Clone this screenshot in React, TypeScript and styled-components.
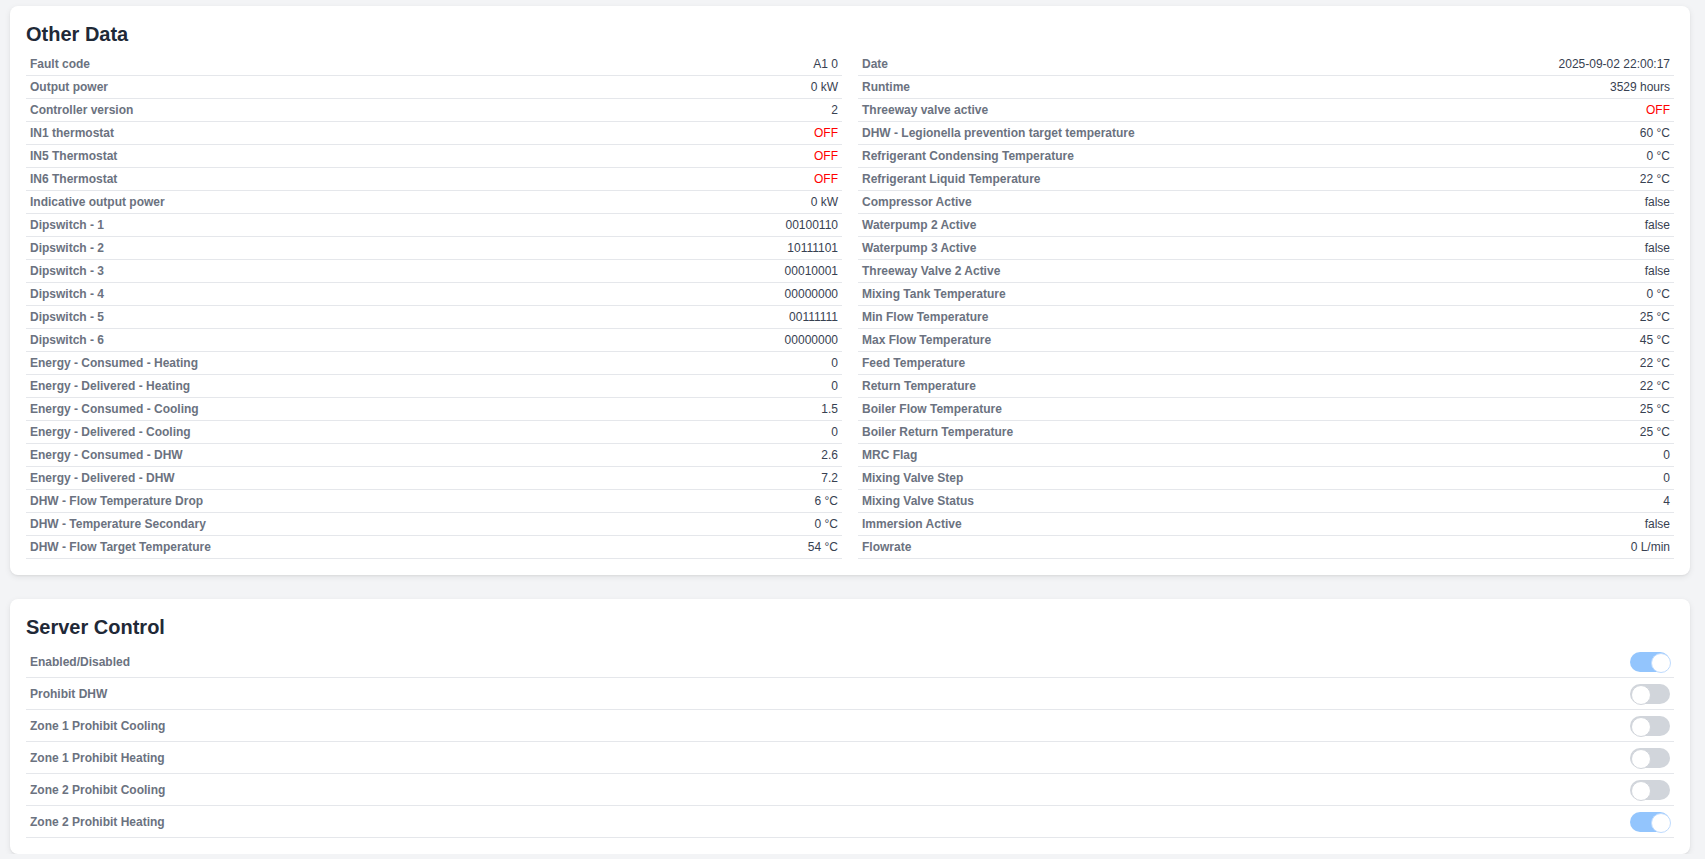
import styled, { createGlobalStyle } from 'styled-components';

const GlobalStyle = createGlobalStyle`
  html,
  body {
    margin: 0;
    background: #f3f4f6;
    font-family: 'Liberation Sans', Arial, Helvetica, sans-serif;
  }
  * {
    box-sizing: border-box;
  }
`;

const Page = styled.div`
  display: flex;
  flex-direction: column;
  gap: 24px;
  padding: 6px 15px 0 10px;
`;

const Card = styled.section`
  background: #ffffff;
  border-radius: 8px;
  box-shadow: 0 2px 6px rgba(0, 0, 0, 0.08), 0 1px 2px rgba(0, 0, 0, 0.05);
  padding: 16px;
`;

const Title = styled.h2`
  margin: 0 0 7px;
  font-size: 20px;
  line-height: 24px;
  font-weight: 700;
  color: #1f2937;
`;

const Columns = styled.div`
  display: grid;
  grid-template-columns: 1fr 1fr;
  column-gap: 16px;
`;

const List = styled.div`
  display: flex;
  flex-direction: column;
`;

const Row = styled.div<{ $tall?: boolean }>`
  display: flex;
  align-items: center;
  justify-content: space-between;
  height: ${({ $tall }) => ($tall ? '32px' : '23px')};
  padding: 0 4px;
  border-bottom: 1px solid #e5e7eb;
  font-size: 12px;
  line-height: 16px;
`;

const Label = styled.span`
  font-weight: 700;
  color: #6b7280;
`;

const Value = styled.span<{ $alert?: boolean }>`
  color: ${({ $alert }) => ($alert ? '#ff0000' : '#374151')};
`;

const Toggle = styled.span<{ $on: boolean }>`
  position: relative;
  display: inline-block;
  width: 40px;
  height: 20px;
  border-radius: 10px;
  background: ${({ $on }) => ($on ? '#93c5fd' : '#d1d5db')};

  &::after {
    content: '';
    position: absolute;
    top: 1px;
    left: ${({ $on }) => ($on ? '21px' : '1px')};
    width: 18px;
    height: 18px;
    border-radius: 50%;
    background: #ffffff;
    border: 1px solid ${({ $on }) => ($on ? '#bfdbfe' : '#d1d5db')};
  }
`;

type Item = [string, string];

const leftItems: Item[] = [
  ['Fault code', 'A1 0'],
  ['Output power', '0 kW'],
  ['Controller version', '2'],
  ['IN1 thermostat', 'OFF'],
  ['IN5 Thermostat', 'OFF'],
  ['IN6 Thermostat', 'OFF'],
  ['Indicative output power', '0 kW'],
  ['Dipswitch - 1', '00100110'],
  ['Dipswitch - 2', '10111101'],
  ['Dipswitch - 3', '00010001'],
  ['Dipswitch - 4', '00000000'],
  ['Dipswitch - 5', '00111111'],
  ['Dipswitch - 6', '00000000'],
  ['Energy - Consumed - Heating', '0'],
  ['Energy - Delivered - Heating', '0'],
  ['Energy - Consumed - Cooling', '1.5'],
  ['Energy - Delivered - Cooling', '0'],
  ['Energy - Consumed - DHW', '2.6'],
  ['Energy - Delivered - DHW', '7.2'],
  ['DHW - Flow Temperature Drop', '6 °C'],
  ['DHW - Temperature Secondary', '0 °C'],
  ['DHW - Flow Target Temperature', '54 °C'],
];

const rightItems: Item[] = [
  ['Date', '2025-09-02 22:00:17'],
  ['Runtime', '3529 hours'],
  ['Threeway valve active', 'OFF'],
  ['DHW - Legionella prevention target temperature', '60 °C'],
  ['Refrigerant Condensing Temperature', '0 °C'],
  ['Refrigerant Liquid Temperature', '22 °C'],
  ['Compressor Active', 'false'],
  ['Waterpump 2 Active', 'false'],
  ['Waterpump 3 Active', 'false'],
  ['Threeway Valve 2 Active', 'false'],
  ['Mixing Tank Temperature', '0 °C'],
  ['Min Flow Temperature', '25 °C'],
  ['Max Flow Temperature', '45 °C'],
  ['Feed Temperature', '22 °C'],
  ['Return Temperature', '22 °C'],
  ['Boiler Flow Temperature', '25 °C'],
  ['Boiler Return Temperature', '25 °C'],
  ['MRC Flag', '0'],
  ['Mixing Valve Step', '0'],
  ['Mixing Valve Status', '4'],
  ['Immersion Active', 'false'],
  ['Flowrate', '0 L/min'],
];

const controls: [string, boolean][] = [
  ['Enabled/Disabled', true],
  ['Prohibit DHW', false],
  ['Zone 1 Prohibit Cooling', false],
  ['Zone 1 Prohibit Heating', false],
  ['Zone 2 Prohibit Cooling', false],
  ['Zone 2 Prohibit Heating', true],
];

function DataList({ items }: { items: Item[] }) {
  return (
    <List>
      {items.map(([label, value]) => (
        <Row key={label}>
          <Label>{label}</Label>
          <Value $alert={value === 'OFF'}>{value}</Value>
        </Row>
      ))}
    </List>
  );
}

export default function App() {
  return (
    <>
      <GlobalStyle />
      <Page>
        <Card>
          <Title>Other Data</Title>
          <Columns>
            <DataList items={leftItems} />
            <DataList items={rightItems} />
          </Columns>
        </Card>

        <Card>
          <Title>Server Control</Title>
          <List>
            {controls.map(([label, on]) => (
              <Row key={label} $tall>
                <Label>{label}</Label>
                <Toggle $on={on} />
              </Row>
            ))}
          </List>
        </Card>
      </Page>
    </>
  );
}
